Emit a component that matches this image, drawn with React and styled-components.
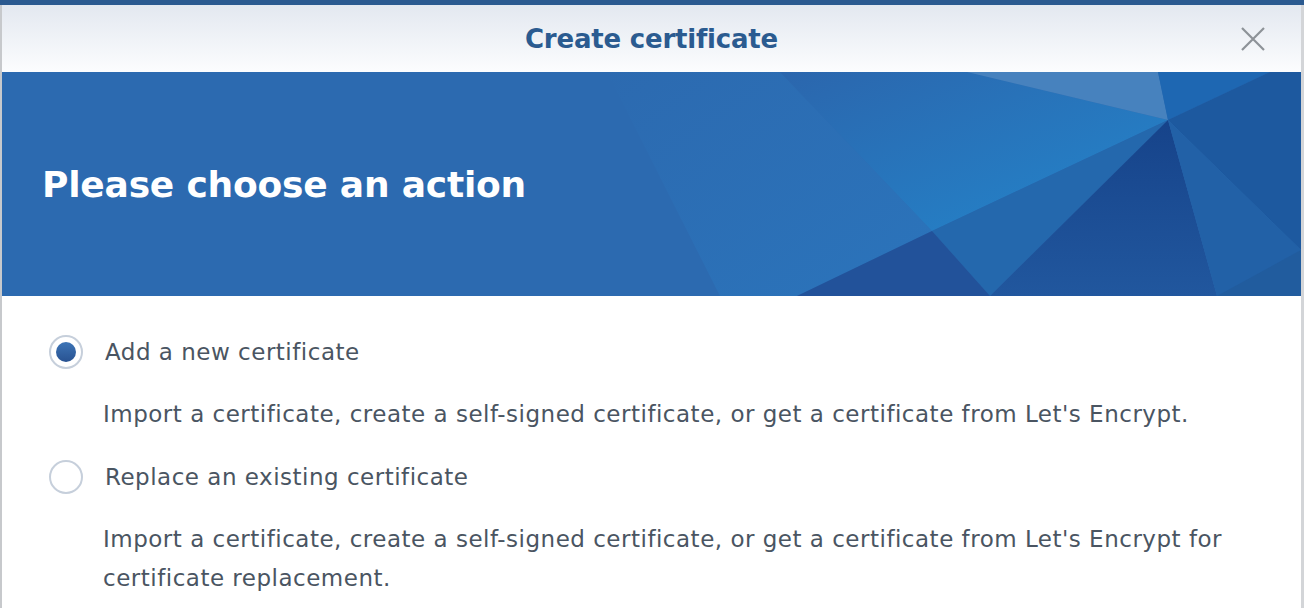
import React, {useState} from 'react'
import styled, {createGlobalStyle} from 'styled-components'

const Global = createGlobalStyle`
  html, body {
    margin: 0;
    padding: 0;
    background: #ffffff;
  }
  body {
    font-family: "DejaVu Sans", Verdana, sans-serif;
    overflow: hidden;
  }
`

const options = [
  {
    id: 'add',
    label: 'Add a new certificate',
    desc: "Import a certificate, create a self-signed certificate, or get a certificate from Let's Encrypt.",
  },
  {
    id: 'replace',
    label: 'Replace an existing certificate',
    desc: "Import a certificate, create a self-signed certificate, or get a certificate from Let's Encrypt for certificate replacement.",
  },
]

function BannerArt() {
  // banner-local coords: page x - 2, page y - 72
  return (
    <Art viewBox="0 0 1299 224" preserveAspectRatio="none">
      <defs>
        <linearGradient id="gBright" x1="0" y1="0" x2="1" y2="1">
          <stop offset="0" stopColor="#2b66ad" />
          <stop offset="1" stopColor="#2386cc" />
        </linearGradient>
        <linearGradient id="gMid" x1="0" y1="0" x2="1" y2="1">
          <stop offset="0" stopColor="#2c6ab0" />
          <stop offset="1" stopColor="#2b74bb" />
        </linearGradient>
        <linearGradient id="gDark" x1="0" y1="0" x2="0" y2="1">
          <stop offset="0" stopColor="#16438a" />
          <stop offset="1" stopColor="#21579e" />
        </linearGradient>
      </defs>
      <polygon points="605,0 778,0 930,159 795,224 718,224" fill="url(#gMid)" />
      <polygon points="778,0 965,0 1166,48 930,159" fill="url(#gBright)" />
      <polygon points="965,0 1156,0 1166,48" fill="#4782be" />
      <polygon points="1156,0 1268,0 1166,48" fill="#1e67b2" />
      <polygon points="1268,0 1299,0 1299,178 1166,48" fill="#1d599f" />
      <polygon points="1166,48 930,159 988,224" fill="#2468ad" />
      <polygon points="930,159 795,224 988,224" fill="#22529a" />
      <polygon points="1166,48 988,224 1215,224" fill="url(#gDark)" />
      <polygon points="1166,48 1215,224 1299,224 1299,178" fill="#2261a7" />
      <polygon points="1299,178 1299,224 1215,224" fill="#215898" opacity="0.6" />
    </Art>
  )
}

function CloseIcon() {
  return (
    <svg width="26" height="26" viewBox="0 0 26 26">
      <path d="M2 2 L24 24 M24 2 L2 24" stroke="#8d9298" strokeWidth="2.2" fill="none" />
    </svg>
  )
}

function App() {
  const [choice, setChoice] = useState('add')

  return (
    <Window>
      <Global />
      <TopStrip />
      <Dialog>
        <Header>
          <Title>Create certificate</Title>
          <Close aria-label="close"><CloseIcon /></Close>
        </Header>
        <Banner>
          <BannerArt />
          <Heading>Please choose an action</Heading>
        </Banner>
        <Body>
          {options.map(o => (
            <Option key={o.id}>
              <Row onClick={() => setChoice(o.id)}>
                <Radio checked={choice === o.id} />
                <Label>{o.label}</Label>
              </Row>
              <Desc>{o.desc}</Desc>
            </Option>
          ))}
        </Body>
      </Dialog>
    </Window>
  )
}

const Window = styled.div`
  width: 1304px;
  height: 608px;
  display: flex;
  flex-direction: column;
  overflow: hidden;
`
const TopStrip = styled.div`
  height: 5px;
  background: #2b5a90;
  flex-shrink: 0;
`
const Dialog = styled.div`
  flex: 1;
  display: flex;
  flex-direction: column;
  border-left: 2px solid #c7c9cc;
  border-right: 3px solid #d3d5d8;
  background: #fff;
`
const Header = styled.div`
  height: 67px;
  flex-shrink: 0;
  display: flex;
  align-items: center;
  justify-content: center;
  position: relative;
  background: linear-gradient(to bottom, #e3e8f0, #fcfdfe);
`
const Title = styled.div`
  font-size: 26px;
  font-weight: bold;
  color: #2b5b90;
  letter-spacing: -0.2px;
`
const Close = styled.div`
  position: absolute;
  right: 35px;
  top: 21px;
  width: 26px;
  height: 26px;
  display: flex;
`
const Banner = styled.div`
  height: 224px;
  flex-shrink: 0;
  position: relative;
  overflow: hidden;
  background: #2c6ab0;
  display: flex;
  align-items: center;
  padding-left: 40px;
`
const Art = styled.svg`
  position: absolute;
  inset: 0;
  width: 100%;
  height: 100%;
`
const Heading = styled.h1`
  position: relative;
  margin: 0;
  font-size: 36px;
  font-weight: bold;
  color: #ffffff;
  letter-spacing: -0.2px;
`
const Body = styled.div`
  padding: 36px 0 0 47px;
  display: flex;
  flex-direction: column;
`
const Option = styled.div`
  display: flex;
  flex-direction: column;
`
const Row = styled.div`
  height: 40px;
  display: flex;
  align-items: center;
  gap: 22px;
  cursor: pointer;
`
const Radio = styled.span`
  width: 34px;
  height: 34px;
  box-sizing: border-box;
  border-radius: 50%;
  border: 2px solid #c6cfdb;
  background: #fff;
  display: flex;
  align-items: center;
  justify-content: center;
  flex-shrink: 0;
  &::after {
    content: '';
    display: ${p => (p.checked ? 'block' : 'none')};
    width: 20px;
    height: 20px;
    border-radius: 50%;
    background: linear-gradient(to bottom, #3d74b6, #285291);
  }
`
const Label = styled.span`
  font-size: 23px;
  letter-spacing: 0.5px;
  color: #4a5562;
`
const Desc = styled.p`
  margin: 23px 0 23px 54px;
  font-size: 23px;
  letter-spacing: 0.5px;
  line-height: 39px;
  color: #4a5562;
  max-width: 1170px;
`

export default App
